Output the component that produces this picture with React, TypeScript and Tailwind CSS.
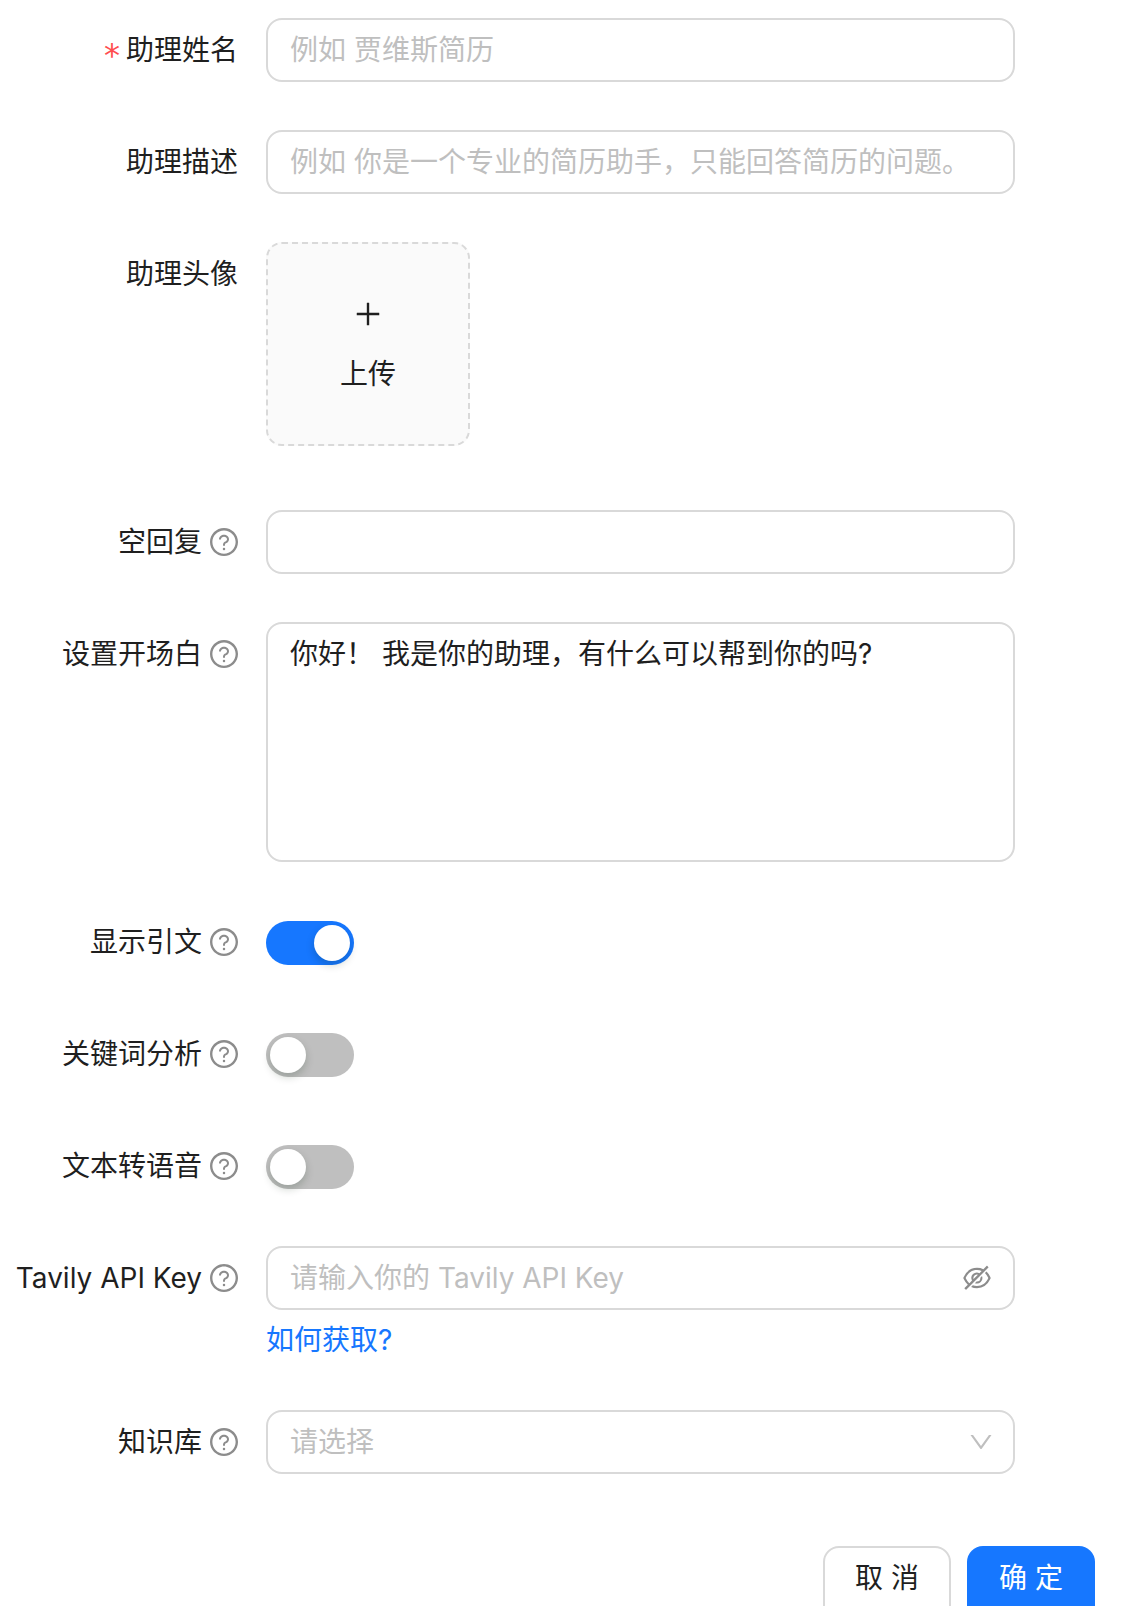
import type { ReactNode } from "react";
import {
  AiOutlineDown,
  AiOutlineEyeInvisible,
  AiOutlinePlus,
  AiOutlineQuestionCircle,
} from "react-icons/ai";

function FormRow({
  label,
  help,
  required,
  children,
}: {
  label: string;
  help?: boolean;
  required?: boolean;
  children: ReactNode;
}) {
  return (
    <div className="flex">
      <div className="w-[238px] h-16 shrink-0 flex items-center justify-end whitespace-nowrap">
        {required && (
          <span className="mr-1.5 mt-2.5 text-[32px] text-[#ff4d4f] font-['DejaVu_Sans',sans-serif]">*</span>
        )}
        <span>{label}</span>
        {help && <AiOutlineQuestionCircle className="ml-1.5 -mr-0.5 text-[32px] text-[#8c8c8c]" />}
      </div>
      <div className="ml-7 w-[749px]">{children}</div>
    </div>
  );
}

function TextField({ placeholder, children }: { placeholder?: string; children?: ReactNode }) {
  return (
    <div className="h-16 flex items-center rounded-2xl border-2 border-[#d9d9d9] bg-white px-[22px]">
      <input
        placeholder={placeholder}
        className="flex-1 min-w-0 bg-transparent outline-none placeholder:text-[#bfbfbf]"
      />
      {children}
    </div>
  );
}

function Toggle({ on }: { on?: boolean }) {
  return (
    <div className="h-16 pt-px flex items-center">
      <div
        className={
          on
            ? "w-[88px] h-11 rounded-full p-1 flex justify-end bg-[#1677ff]"
            : "w-[88px] h-11 rounded-full p-1 flex justify-start bg-[#bfbfbf]"
        }
      >
        <div className="w-9 h-9 rounded-full bg-white shadow-[0_4px_8px_0_rgba(0,35,11,0.2)]" />
      </div>
    </div>
  );
}

export default function App() {
  return (
    <div className="h-[1606px] overflow-hidden bg-white text-[28px] leading-[44px] text-[#1f1f1f] font-['Inter','Noto_Sans_CJK_SC',sans-serif]">
      <div className="pt-[18px] flex flex-col gap-12">
        <FormRow label="助理姓名" required>
          <TextField placeholder="例如 贾维斯简历" />
        </FormRow>
        <FormRow label="助理描述">
          <TextField placeholder="例如 你是一个专业的简历助手，只能回答简历的问题。" />
        </FormRow>
        <FormRow label="助理头像">
          <div className="w-[204px] h-[204px] mb-4 rounded-2xl border-2 border-dashed border-[#d9d9d9] bg-[#fafafa] flex flex-col items-center justify-center">
            <div className="h-11 flex items-center">
              <AiOutlinePlus className="text-[32px]" />
            </div>
            <div className="mt-4">上传</div>
          </div>
        </FormRow>
        <FormRow label="空回复" help>
          <TextField />
        </FormRow>
        <FormRow label="设置开场白" help>
          <textarea
            readOnly
            defaultValue="你好！ 我是你的助理，有什么可以帮到你的吗?"
            className="block w-full h-60 resize-none rounded-2xl border-2 border-[#d9d9d9] bg-white px-[22px] py-2 outline-none"
          />
        </FormRow>
        <FormRow label="显示引文" help>
          <Toggle on />
        </FormRow>
        <FormRow label="关键词分析" help>
          <Toggle />
        </FormRow>
        <FormRow label="文本转语音" help>
          <Toggle />
        </FormRow>
        <FormRow label="Tavily API Key" help>
          <TextField placeholder="请输入你的 Tavily API Key">
            <AiOutlineEyeInvisible className="ml-2 -mr-0.5 text-[32px] text-[#8c8c8c]" />
          </TextField>
          <div className="mt-2 text-[#1677ff]">如何获取?</div>
        </FormRow>
        <FormRow label="知识库" help>
          <div className="h-16 flex items-center justify-between rounded-2xl border-2 border-[#d9d9d9] bg-white px-[22px]">
            <span className="text-[#bfbfbf]">请选择</span>
            <AiOutlineDown className="-mr-1 text-[28px] text-[#bfbfbf]" />
          </div>
        </FormRow>
      </div>

      <div className="mt-[72px] w-[1095px] flex justify-end gap-4">
        <button className="w-32 h-20 pb-4 rounded-2xl border-2 border-[#d9d9d9] bg-white">
          取 消
        </button>
        <button className="w-32 h-20 pb-4 rounded-2xl bg-[#1677ff] text-white">
          确 定
        </button>
      </div>
    </div>
  );
}
